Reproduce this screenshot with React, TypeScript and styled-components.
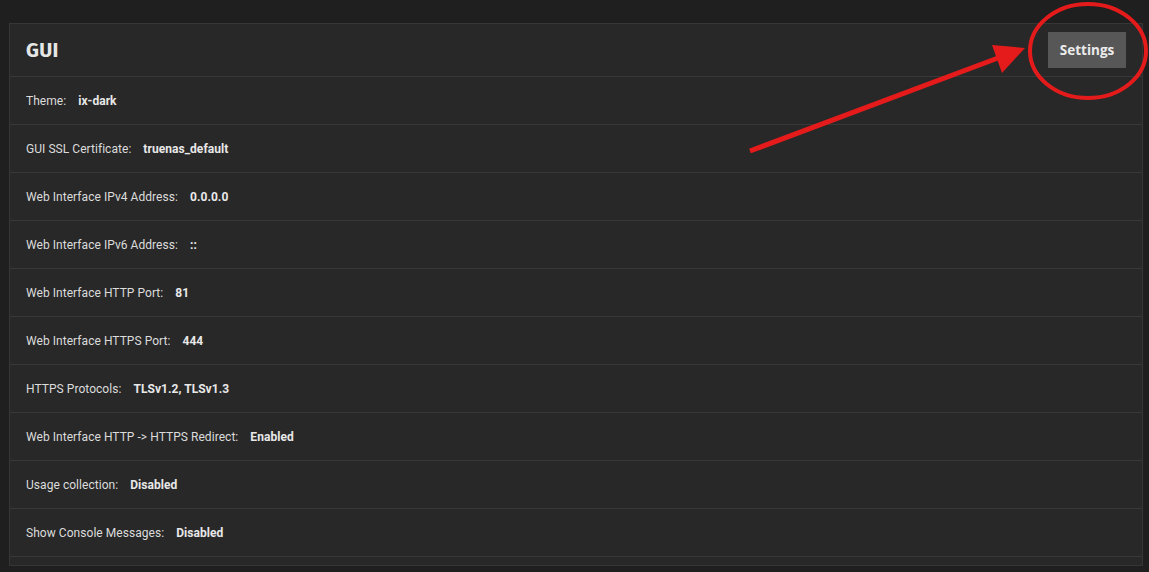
import React from "react";
import styled, { createGlobalStyle } from "styled-components";

const GlobalStyle = createGlobalStyle`
  html, body {
    margin: 0;
    padding: 0;
    background: #1f1f1f;
    font-family: Roboto, "Liberation Sans", sans-serif;
  }
`;

const Page = styled.div`
  position: relative;
  width: 1149px;
  height: 572px;
  padding: 23px 0 0 9px;
  box-sizing: border-box;
  overflow: hidden;
`;

const Card = styled.section`
  width: 1134px;
  box-sizing: border-box;
  background: #282828;
  border: 1px solid #363636;
  padding-bottom: 8px;
`;

const Header = styled.div`
  display: flex;
  align-items: center;
  justify-content: space-between;
  height: 52px;
  padding: 0 16px 0 16px;
  border-bottom: 1px solid #383838;
`;

const Title = styled.h1`
  margin: 0;
  font-family: "Fira Sans", "Open Sans", "Noto Sans", sans-serif;
  font-size: 20px;
  font-weight: 700;
  color: #e6e6e6;
  letter-spacing: 0.3px;
`;

const SettingsButton = styled.button`
  height: 36px;
  width: 78px;
  padding: 0;
  border: none;
  background: #575757;
  color: #ececec;
  font-family: "Open Sans", "Noto Sans", sans-serif;
  font-size: 13.5px;
  font-weight: 700;
  cursor: pointer;
`;

const Row = styled.div`
  display: flex;
  align-items: center;
  gap: 12px;
  height: 47px;
  padding: 0 16px;
  border-bottom: 1px solid #383838;
  font-size: 12px;
  letter-spacing: 0.05px;
  color: #dcdcdc;
`;

const Label = styled.span`
  font-weight: 400;
`;

const Value = styled.span`
  font-weight: 700;
  color: #e8e8e8;
`;

const Annotation = styled.svg`
  position: absolute;
  left: 0;
  top: 0;
  pointer-events: none;
`;

const rows: [string, string][] = [
  ["Theme:", "ix-dark"],
  ["GUI SSL Certificate:", "truenas_default"],
  ["Web Interface IPv4 Address:", "0.0.0.0"],
  ["Web Interface IPv6 Address:", "::"],
  ["Web Interface HTTP Port:", "81"],
  ["Web Interface HTTPS Port:", "444"],
  ["HTTPS Protocols:", "TLSv1.2, TLSv1.3"],
  ["Web Interface HTTP -> HTTPS Redirect:", "Enabled"],
  ["Usage collection:", "Disabled"],
  ["Show Console Messages:", "Disabled"],
];

export default function App() {
  return (
    <Page>
      <GlobalStyle />
      <Card>
        <Header>
          <Title>GUI</Title>
          <SettingsButton>Settings</SettingsButton>
        </Header>
        {rows.map(([label, value]) => (
          <Row key={label}>
            <Label>{label}</Label>
            <Value>{value}</Value>
          </Row>
        ))}
      </Card>
      <Annotation width="1149" height="572" viewBox="0 0 1149 572">
        <ellipse cx="1088" cy="51" rx="58" ry="47" fill="none" stroke="#e51b1b" strokeWidth="4" />
        <line x1="750" y1="151" x2="998" y2="58" stroke="#e51b1b" strokeWidth="5" />
        <polygon points="1025,48 992,45 1002,73" fill="#e51b1b" />
      </Annotation>
    </Page>
  );
}
